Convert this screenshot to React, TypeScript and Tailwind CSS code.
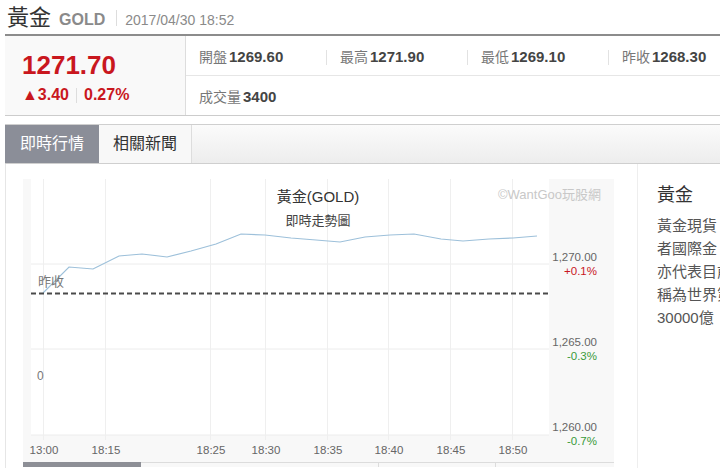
const FONT = '"Liberation Sans", "Noto Sans CJK TC", sans-serif';

const stats = [
  { label: "開盤", value: "1269.60" },
  { label: "最高", value: "1271.90" },
  { label: "最低", value: "1269.10" },
  { label: "昨收", value: "1268.30" },
];

// x positions of the time gridlines inside the chart
const ticks = [
  { x: 20, t: "13:00" },
  { x: 82, t: "18:15" },
  { x: 187, t: "18:25" },
  { x: 242, t: "18:30" },
  { x: 304, t: "18:35" },
  { x: 365, t: "18:40" },
  { x: 427, t: "18:45" },
  { x: 489, t: "18:50" },
];

const points: [number, number][] = [
  [20, 114], [46, 88], [70, 90], [96, 77], [119, 75], [144, 78], [168, 72],
  [193, 65], [218, 55], [242, 56], [268, 59], [293, 61], [317, 63], [342, 58],
  [367, 56], [391, 55], [418, 60], [440, 62], [466, 60], [490, 59], [514, 57],
];

const yLabels = [
  { y: 82, v: "1,270.00", p: "+0.1%", c: "#c9171e" },
  { y: 167, v: "1,265.00", p: "-0.3%", c: "#3a9a3a" },
  { y: 252, v: "1,260.00", p: "-0.7%", c: "#3a9a3a" },
];

function Chart() {
  const line = points.map((p) => p.join(",")).join(" ");
  return (
    <svg width="591" height="288" viewBox="0 0 591 288" className="block" style={{ fontFamily: FONT }}>
      <rect x="0" y="0" width="591" height="288" fill="#f8f8f8" />
      <rect x="8" y="0" width="518" height="256" fill="#ffffff" />
      {[85, 170, 256].map((y) => (
        <line key={y} x1="8" x2="526" y1={y} y2={y} stroke="#ececec" strokeWidth="1" />
      ))}
      {ticks.map((k) => (
        <line key={k.x} x1={k.x + 0.5} x2={k.x + 0.5} y1="0" y2="261" stroke="#efefef" strokeWidth="1" />
      ))}
      <text x="295" y="23" textAnchor="middle" fontSize="15" fill="#333">黃金(GOLD)</text>
      <text x="295" y="46" textAnchor="middle" fontSize="13" fill="#444">即時走勢圖</text>
      <text x="578" y="20" textAnchor="end" fontSize="13" fill="#c8c8c8">©WantGoo玩股網</text>
      <polyline points={line} fill="none" stroke="#9dc0da" strokeWidth="1.2" />
      <line x1="8" x2="526" y1="114.5" y2="114.5" stroke="#4a4a4a" strokeWidth="2" strokeDasharray="5 3" />
      <text x="15" y="107" fontSize="13" fill="#777">昨收</text>
      <text x="14" y="201" fontSize="12" fill="#777">0</text>
      {yLabels.map((l) => (
        <g key={l.v}>
          <text x="574" y={l.y} textAnchor="end" fontSize="11.5" fill="#666">{l.v}</text>
          <text x="574" y={l.y + 14} textAnchor="end" fontSize="11.5" fill={l.c}>{l.p}</text>
        </g>
      ))}
      {ticks.map((k) => (
        <text key={k.t} x={k.x + 1} y="275" textAnchor="middle" fontSize="11.5" fill="#666">{k.t}</text>
      ))}
      <line x1="0" x2="591" y1="283.5" y2="283.5" stroke="#dcdcdc" strokeWidth="1" />
      <line x1="355.5" x2="355.5" y1="283" y2="288" stroke="#dcdcdc" strokeWidth="1" />
      <line x1="472.5" x2="472.5" y1="283" y2="288" stroke="#dcdcdc" strokeWidth="1" />
      <rect x="0" y="283" width="118" height="5" fill="#8d8f96" />
    </svg>
  );
}

export default function App() {
  return (
    <div className="w-[720px] h-[468px] overflow-hidden bg-white text-[#333]" style={{ fontFamily: FONT }}>
      {/* title */}
      <div className="h-[34px] flex items-end pl-[7px] pb-[3px]">
        <span className="text-[22px] leading-[26px] text-[#333]">黃金</span>
        <span className="ml-[8px] text-[16px] leading-[22px] font-bold text-[#8a8a8a]">GOLD</span>
        <span className="ml-[11px] mb-[5px] h-[16px] border-l border-[#dddddd]"></span>
        <span className="ml-[8px] text-[14px] leading-[22px] text-[#8a8a8a]">2017/04/30 18:52</span>
      </div>

      <div className="ml-[5px]">
        {/* quote box */}
        <div className="border-t-2 border-[#8c8c8c]">
          <div className="flex h-[80px] border-b border-[#cccccc]">
            <div className="w-[181px] shrink-0 bg-[#f9f9f9] border-r border-[#dddddd] pl-[17px] pt-[13px]">
              <div className="text-[26px] leading-[32px] font-bold text-[#c9171e]">1271.70</div>
              <div className="flex items-center mt-[4px] text-[16px] leading-[20px] font-bold text-[#c9171e]">
                <span>▲3.40</span>
                <span className="mx-[7px] h-[15px] border-l border-[#dddddd]"></span>
                <span>0.27%</span>
              </div>
            </div>
            <div className="flex-1 min-w-0 flex flex-col overflow-hidden">
              <div className="h-[40px] pt-[3px] flex items-center border-b border-[#e6e6e6]">
                {stats.map((s, i) => (
                  <div key={s.label} className="w-[141px] shrink-0 flex items-center pl-[13px]">
                    <span className="text-[14px] text-[#777]">{s.label}</span>
                    <span className="ml-[2px] text-[15px] font-bold text-[#444]">{s.value}</span>
                    {i < 3 && <span className="ml-auto h-[15px] border-l border-[#e2e2e2]"></span>}
                  </div>
                ))}
              </div>
              <div className="h-[39px] pt-[3px] flex items-center pl-[13px]">
                <span className="text-[14px] text-[#777]">成交量</span>
                <span className="ml-[2px] text-[15px] font-bold text-[#444]">3400</span>
              </div>
            </div>
          </div>
        </div>

        {/* tabs */}
        <div className="mt-[8px] h-[40px] flex border-t border-b border-[#cfcfcf] bg-gradient-to-b from-[#fbfbfb] to-[#ededed]">
          <div className="w-[94px] flex items-center justify-center bg-[#8b8e98] text-white text-[16px]">即時行情</div>
          <div className="w-[93px] flex items-center justify-center bg-[#f8f8f8] border-r border-[#dddddd] text-[#333] text-[16px]">相關新聞</div>
        </div>

        {/* content */}
        <div className="flex border-l border-[#e6e6e6] h-[304px]">
          <div className="w-[632px] shrink-0 pl-[17px] pt-[15px] border-r border-[#eeeeee]">
            <Chart />
          </div>
          <div className="flex-1 min-w-0 pl-[19px] pt-[18px] overflow-hidden">
            <div className="text-[18px] leading-[26px] text-[#333]">黃金</div>
            <div className="mt-[6px] text-[15px] leading-[23px] text-[#555] whitespace-nowrap">
              <div>黃金現貨，</div>
              <div>者國際金，</div>
              <div>亦代表目前</div>
              <div>稱為世界第</div>
              <div>30000億</div>
            </div>
          </div>
        </div>
      </div>
    </div>
  );
}
